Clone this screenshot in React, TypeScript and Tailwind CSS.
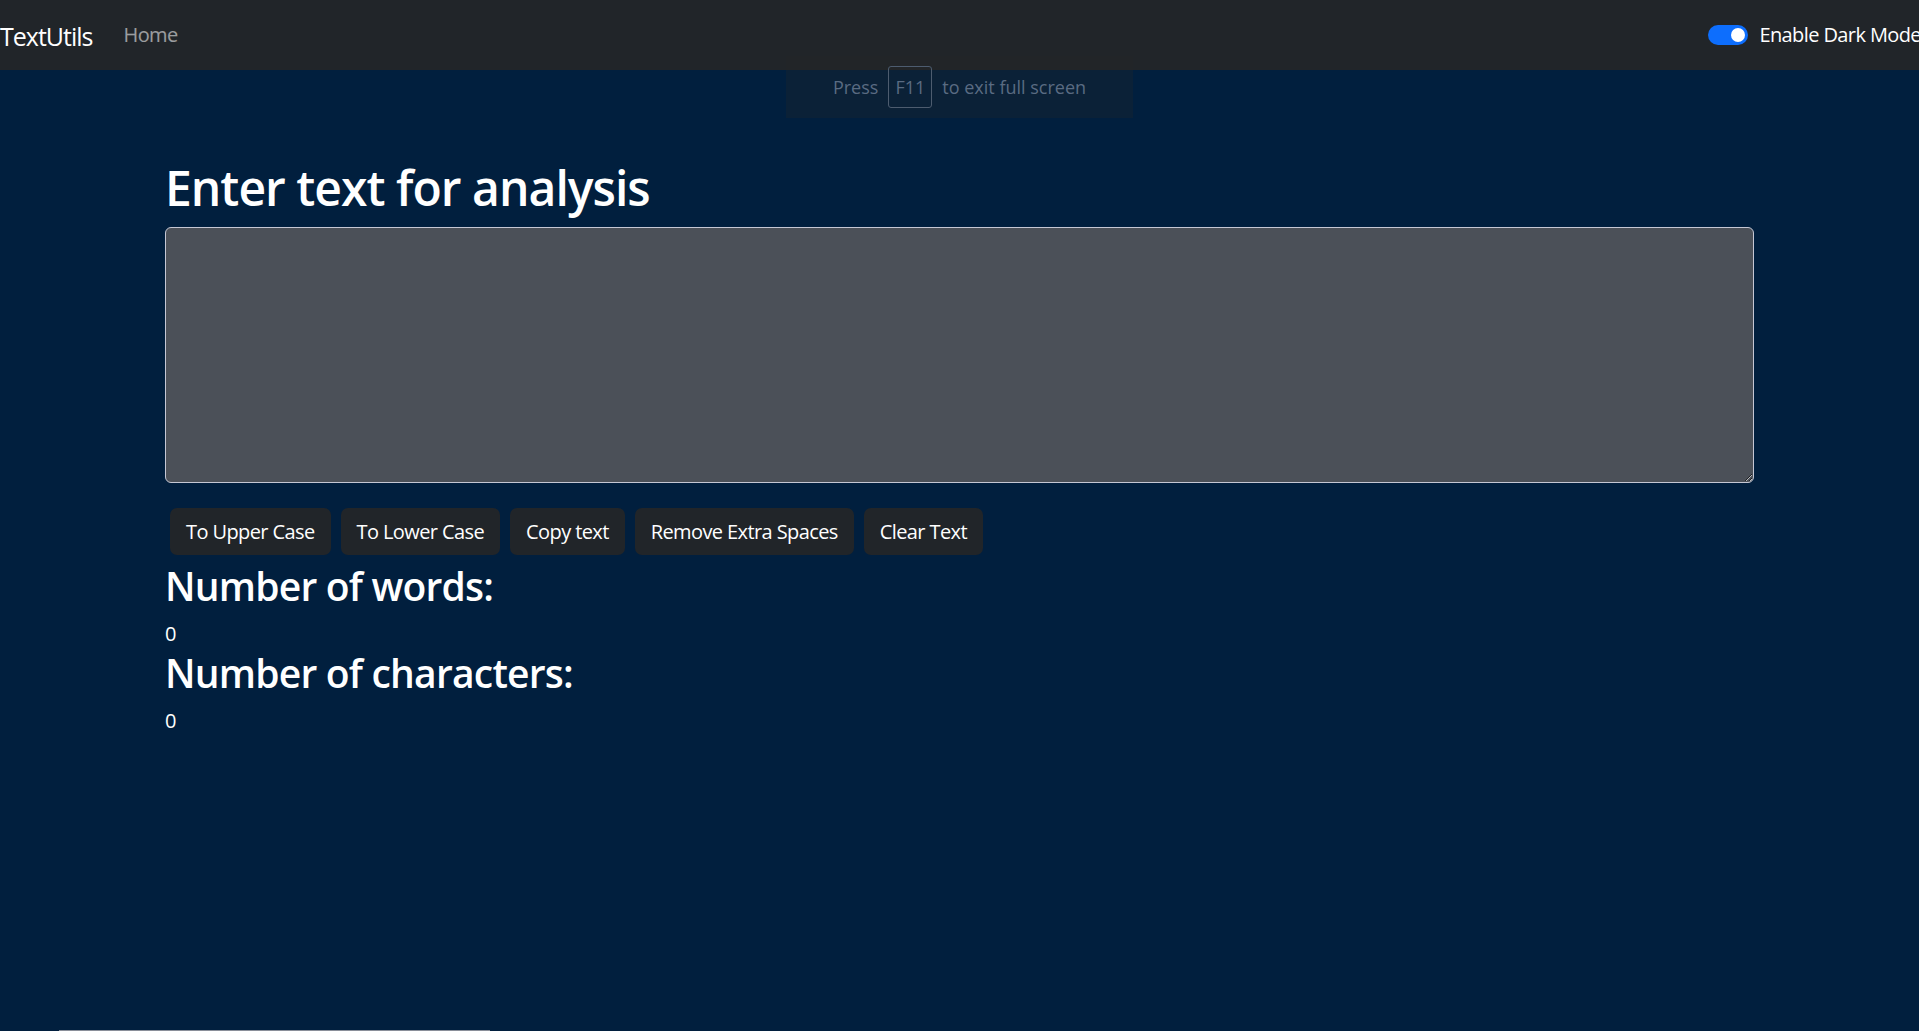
import { useState } from "react";

export default function App() {
  const [text, setText] = useState("");
  const words = text.split(/\s+/).filter((w) => w.length > 0).length;

  return (
    <div className="relative h-[1031px] w-full overflow-hidden bg-[#011f3e] font-['Open_Sans',sans-serif] text-white">
      {/* navbar */}
      <nav className="flex h-[70px] items-center justify-between bg-[#212529]">
        <div className="flex items-center">
          <a href="/" className="mt-[3px] text-[25px] leading-none tracking-[-0.04em]">TextUtils</a>
          <a href="/" className="ml-[31px] text-[20px] leading-none tracking-[-0.03em] text-white/55">Home</a>
        </div>
        <div className="flex items-center whitespace-nowrap">
          <span className="flex h-[20px] w-[40px] items-center justify-end rounded-full bg-[#0d6efd] pr-[3px]">
            <span className="h-[14px] w-[14px] rounded-full bg-white" />
          </span>
          <label className="ml-[11px] mr-[-2px] text-[20px] leading-none tracking-[-0.03em]">Enable Dark Mode</label>
        </div>
      </nav>

      {/* full screen notice */}
      <div className="absolute left-[786px] top-[56px] flex h-[62px] w-[347px] items-center justify-center gap-[10px] bg-[rgba(40,40,40,0.28)] text-[18px] text-[#5a6b82]">
        <span>Press</span>
        <span className="flex h-[42px] w-[44px] items-center justify-center rounded-[3px] border border-[#4d5c6f]">F11</span>
        <span>to exit full screen</span>
      </div>

      <main className="mx-auto w-[1589px]">
        <h1 className="mt-[88px] mb-[9px] text-[48px] font-semibold leading-[60px] tracking-[-0.02em]">Enter text for analysis</h1>
        <textarea
          value={text}
          onChange={(e) => setText(e.target.value)}
          className="block h-[256px] w-full rounded-[6px] border border-[#c5c7d4] bg-[#4b5058] px-[15px] py-[8px] text-[20px] text-white outline-none"
        />
        <div className="mt-[25px] flex gap-[10px] pl-[5px] text-[20px] tracking-[-0.03em]">
          <button className="h-[47px] rounded-[7px] bg-[#212529] px-[16px]">To Upper Case</button>
          <button className="h-[47px] rounded-[7px] bg-[#212529] px-[16px]">To Lower Case</button>
          <button className="h-[47px] rounded-[7px] bg-[#212529] px-[16px]">Copy text</button>
          <button className="h-[47px] rounded-[7px] bg-[#212529] px-[16px]">Remove Extra Spaces</button>
          <button className="h-[47px] rounded-[7px] bg-[#212529] px-[16px]">Clear Text</button>
        </div>
        <h2 className="mt-[7px] mb-[9px] text-[39px] font-semibold leading-[48px] tracking-[-0.02em]">Number of words:</h2>
        <p className="text-[20px] leading-[30px]">{words}</p>
        <h2 className="mb-[9px] text-[39px] font-semibold leading-[48px] tracking-[-0.02em]">Number of characters:</h2>
        <p className="text-[20px] leading-[30px]">{text.length}</p>
      </main>

      <div className="absolute bottom-0 left-[59px] h-px w-[431px] bg-[#8a8f99]" />
    </div>
  );
}
